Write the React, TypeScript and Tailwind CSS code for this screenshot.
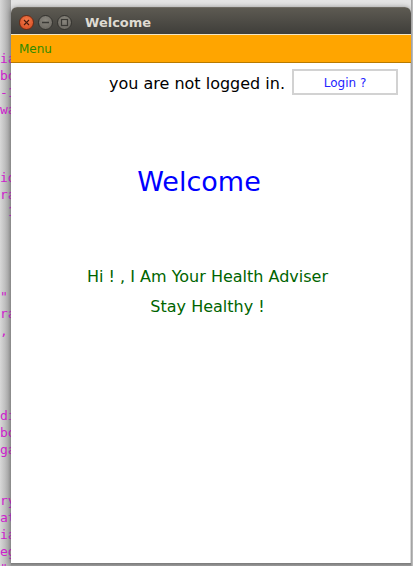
import React from "react";

const codeLines = [
  "ial", "bor", "-1;", "wai", "", "", "", "idx", "ran", " 1;", "", "", "", "",
  "\"", "ran", ",", "", "", "", "", "dis", "bor", "gap", "", "", "ry", "at", "ial", "eg", "\"",
];

function TitleButtons() {
  return (
    <div className="flex items-center gap-[4px] pl-[8px]">
      <div className="w-[15px] h-[15px] rounded-full border border-[#6a2a14] bg-[radial-gradient(circle_at_50%_35%,#f47c4c,#d2461c)] flex items-center justify-center">
        <svg width="7" height="7" viewBox="0 0 7 7">
          <path d="M1 1 L6 6 M6 1 L1 6" stroke="#4a1a0c" strokeWidth="1.1" />
        </svg>
      </div>
      <div className="w-[15px] h-[15px] rounded-full border border-[#34332f] bg-[radial-gradient(circle_at_50%_35%,#8a877f,#66635c)] flex items-center justify-center">
        <svg width="9" height="9" viewBox="0 0 9 9">
          <path d="M1 4.5 L8 4.5" stroke="#3a3935" strokeWidth="1.4" />
        </svg>
      </div>
      <div className="w-[15px] h-[15px] rounded-full border border-[#34332f] bg-[radial-gradient(circle_at_50%_35%,#8a877f,#66635c)] flex items-center justify-center">
        <svg width="9" height="9" viewBox="0 0 9 9">
          <rect x="1.5" y="1.5" width="6" height="6" fill="none" stroke="#3a3935" strokeWidth="1.2" />
        </svg>
      </div>
    </div>
  );
}

export default function App() {
  return (
    <div className="w-[413px] h-[566px] overflow-hidden flex bg-[#dedede]">
      {/* desktop background strip with editor text */}
      <div className="w-[11px] h-full shrink-0 overflow-hidden bg-gradient-to-r from-[#d8d8d8] to-[#a2a2a2] pt-[50px] font-['DejaVu_Sans_Mono',monospace] text-[13px] leading-[17px] text-[#cc22cc] whitespace-pre">
        {codeLines.map((l, i) => (
          <div key={i} className="h-[17px]">{l}</div>
        ))}
      </div>

      {/* window column */}
      <div className="w-[400px] shrink-0 flex flex-col bg-gradient-to-b from-[#e4e4e4] to-[#d0d0d0]">
        <div className="h-[7px]" />
        <div className="h-[556px] flex flex-col rounded-t-[6px] overflow-hidden bg-white shadow-[0_0_5px_rgba(0,0,0,0.35)]">
          {/* title bar */}
          <div className="h-[27px] flex items-center pt-[3px] bg-gradient-to-b from-[#5d5a52] to-[#3f3e3a] border-t border-[#6e6a62]">
            <TitleButtons />
            <span className="ml-[13px] font-['DejaVu_Sans',sans-serif] font-bold text-[13px] text-[#dfdbd2]">
              Welcome
            </span>
          </div>
          {/* menu bar */}
          <div className="h-[29px] flex items-center pl-[8px] bg-[#ffa500] border-t border-[#f3e6c4] border-b border-b-[#b87a00]">
            <span className="font-['DejaVu_Sans',sans-serif] text-[12px] text-[#2e8a00]">Menu</span>
          </div>
          {/* content */}
          <div className="flex-1 flex flex-col pt-[6px] border-r border-[#d8d8d8]">
            <div className="h-[26px] flex items-center justify-end pr-[12px] gap-[7px]">
              <span className="mt-[4px] font-['DejaVu_Sans',sans-serif] text-[16px] text-black">you are not logged in.</span>
              <div className="w-[106px] h-[26px] flex items-center justify-center border-2 border-[#d2d2d2] bg-white">
                <span className="mt-[2px] font-['DejaVu_Sans',sans-serif] text-[12px] text-[#2323ff]">Login ?</span>
              </div>
            </div>
            <div className="mt-[71px] pr-[23px] text-center font-['DejaVu_Sans',sans-serif] text-[27px] leading-[32px] text-[#0000ff]">
              Welcome
            </div>
            <div className="mt-[64px] pr-[6px] text-center font-['DejaVu_Sans',sans-serif] text-[16px] leading-[30px] text-[#006400]">
              <div>Hi ! , I Am Your Health Adviser</div>
              <div>Stay Healthy !</div>
            </div>
          </div>
        </div>
        <div className="h-[3px] bg-gradient-to-b from-[#7a7a7a] to-[#9a9a9a]" />
      </div>

      <div className="flex-1 h-full bg-gradient-to-r from-[#9a9a9a] to-[#c4c4c4]" />
    </div>
  );
}
